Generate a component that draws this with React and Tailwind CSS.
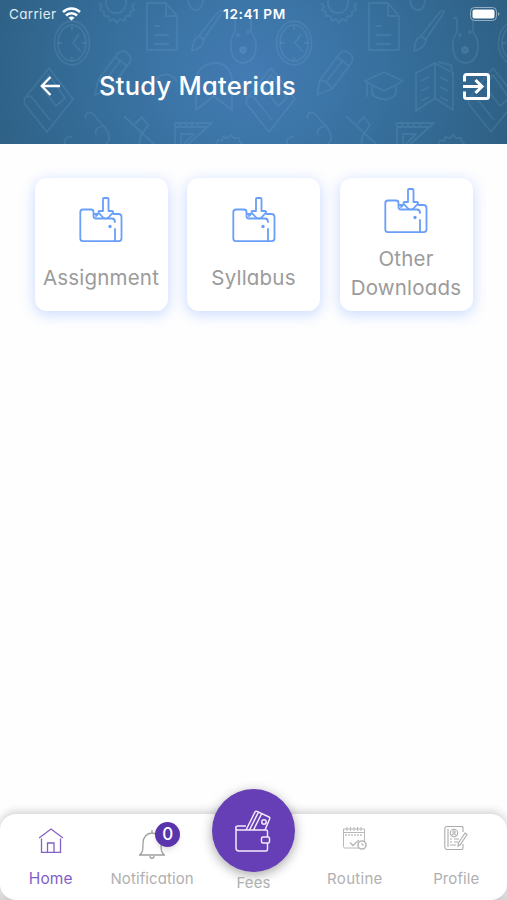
const materials = ["Assignment", "Syllabus", "Other Downloads"];

// School doodles, one tile is 222px wide
function Doodles() {
  return (
    <svg
      className="absolute inset-0 h-full w-full"
      viewBox="0 0 507 144"
      fill="none"
      stroke="#8fb9dc"
      strokeOpacity="0.15"
      strokeWidth="1.8"
      strokeLinejoin="round"
    >
      <defs>
        <g id="tile">
          {/* clock */}
          <ellipse cx="72" cy="43" rx="17.5" ry="22" />
          <ellipse cx="72" cy="43" rx="14" ry="18" />
          <path d="M79 34l-6 9 8 9M72 26v4M72 57v3M58 43h4M82 43h4" />
          {/* gear */}
          <circle cx="116" cy="3" r="10" />
          <path d="M99 3l3 3-2 4 4 2v4l4 0 2 5 4-2 3 4 3-4 4 2 2-5h4v-4l4-2-2-4 3-3" />
          {/* document */}
          <path d="M147 3h19l11 13v34h-30zM166 3v13h11M154 26h6M154 35h15M154 44h15" />
          {/* brush */}
          <path d="M192 51c1-8 2-13 7-15l19-24c3-3 5-1 3 2l-17 25c0 6-5 10-12 12zM199 36l5 4" />
          {/* bulb and flask */}
          <path d="M188 0c1 7 4 10 8 10s7-4 7-10" />
          <path d="M231 18h4v14c-7 8-6 30 8 31 15-1 16-22 8-31V18" />
          <circle cx="243" cy="50" r="3" fill="#8fb9dc" fillOpacity=".15" />
          <circle cx="238" cy="35" r="1" />
          <circle cx="248" cy="32" r="1" />
          {/* pencil */}
          <path d="M95 95l3-15 20-27c6-5 15 2 12 9l-20 27zM98 80c5 1 10 4 12 9M115 57l12 9M104 82l17-22" />
          {/* book */}
          <path d="M49 68L25 98c-2 4 0 7 2 9l20 25 26-33zM27 97c3-2 5 0 7 3l16 20M49 75l-8 11 15 20 9-8z" />
          {/* glasses */}
          <path d="M86 119c-3-6 4-9 8-4l12 14c5 8 4 13-2 16M96 135c-2-6 4-10 10-8" />
          {/* compass */}
          <path d="M124 116l32 30M135 124l7-7 6 8-8 12M141 134l-2 12M65 145c-1-6 2-9 7-8" />
          {/* set square */}
          <path d="M175 146v-23h37l-26 23M175 127h33M181 146v-12h13l-12 12M180 123v4M186 123v4M192 123v4M198 123v4" />
          <path d="M216 145l2-5 4 1 1-4 5 1 3-3 3 3 5 0 1 4 4 3" />
        </g>
      </defs>
      <use href="#tile" />
      <use href="#tile" x="222" />
      <use href="#tile" x="444" />
      {/* ribbon behind the title */}
      <path d="M196 110V78c2-10 10-15 20-15s14 7 16 15v32l-18-14zM155 82c4-10 18-10 22 0" />
      {/* graduation cap */}
      <path d="M365 81l19-9 19 9-19 10zM372 86v8c7 7 18 7 24 0v-8M367 83v14" />
      {/* map */}
      <path d="M416 73l19-10 18 10v37l-18-12-19 13zM435 63v35M421 81l8-4M421 91l8-4M421 101l8-4M440 77l8 4M440 87l8 4M440 97l8 4M438 62l13 3 1 6" />
    </svg>
  );
}

function FolderIcon() {
  return (
    <svg
      className="h-[46px] w-11 shrink-0"
      viewBox="0 0 44 46"
      fill="none"
      stroke="#699ff8"
      strokeWidth="1.8"
      strokeLinejoin="round"
      strokeLinecap="round"
    >
      <path d="M17 21.500h16c2 0 3 1.200 3 3.500M36 32v12M17 21.500c-1.500 0-2.500-1-2.500-2.500v-4c0-1.500-.8-2.500-2.500-2.500H4c-2 0-2.700 1-2.700 2.700V41.500c0 1.700 1 2.700 2.700 2.700h35.500c2 0 3-1 3-2.700V20c0-2-1-3-3-3h-5M16 17h3l-2 2" />
      <path d="M25 1h3.500c.7 0 1 .4 1 1v12h3c1.700 0 2 1 1 2.200l-4 4.300c-1.500 1-4 1-5.500 0l-4-4.300c-1-1.200-.7-2.200 1-2.200h3V2c0-.6.300-1 1-1z" fill="white" />
      <circle cx="31" cy="29.500" r=".8" fill="#699ff8" />
    </svg>
  );
}

function HomeIcon() {
  return (
    <svg className="h-[26px] w-6" viewBox="0 0 24 26" fill="none" stroke="#8061c7" strokeWidth="1.3">
      <path d="M0 10L12 1l12 9M2.500 10.500v13.800h19V10.500M8.500 24v-9h6.500v9" />
    </svg>
  );
}

function BellIcon() {
  return (
    <svg className="h-[30px] w-7" viewBox="0 0 28 30" fill="none" stroke="#a0a0a0" strokeWidth="1.300">
      <path d="M14 1v3M2 26c3-3 3-6 3-12 0-6 4-10 9-10s9 4 9 10c0 6 0 9 3 12zM1 26h26M12 27c0 3 4 3 4 0" />
    </svg>
  );
}

function WalletIcon() {
  return (
    <svg className="h-[42px] w-9" viewBox="0 0 36 42" fill="none" stroke="#f2eafa" strokeWidth="1.500" strokeLinejoin="round">
      <path d="M11 20L20 2c.5-1 1-1 2-.600l12 5.600c1 .500 1 1 .600 2L30 20M14.500 20l9-18M18.500 20l8-16M11 16H3c-3 0-3 4 0 4h28c1 0 1.500.6 1.500 1.500V27M1 18v20c0 2 1 3 3 3h27c1 0 1.500-.6 1.500-1.500V33" />
      <rect x="26.500" y="27" width="8" height="6" rx="1.500" />
      <circle cx="29" cy="12" r="2.200" />
    </svg>
  );
}

function CalendarIcon() {
  return (
    <svg className="h-6 w-6" viewBox="0 0 24 24" fill="none" stroke="#b8b8b8" strokeWidth="1">
      <path d="M16 22H2c-1 0-1.500-.5-1.500-1.500V3h21v13M.500 6.500h21M4 1v4M7.500 1v4M11 1v4M14.500 1v4M18 1v4" />
      <path d="M3 8v2M6 8v2M9 8v2M12 8v2M15 8v2M18 8v2M7 16.500l3 3 6-5.500" strokeWidth="1.300" />
      <circle cx="19" cy="19" r="4" strokeWidth="1.600" />
      <path d="M19 17v2h2" />
    </svg>
  );
}

function ProfileIcon() {
  return (
    <svg className="h-6 w-6" viewBox="0 0 24 24" fill="none" stroke="#acacac" strokeWidth="1.100">
      <path d="M19 6V1.500C19 1 18.500.500 18 .500H3C1.500.500.800 1.500.800 3v18c0 1.500.700 2.500 2.200 2.500h15c1 0 1-1 1-2V18M4 3v18" />
      <circle cx="10" cy="7" r="3.700" />
      <circle cx="10" cy="6" r="1.200" />
      <path d="M7.500 9.500c1-2 4-2 5 0M6 13h2M10 13h5M6 16h2M10 16h4M6 19h6M21 7l2 1.500-6.500 10L14 20l.500-3z" />
    </svg>
  );
}

export default function App() {
  return (
    <div className="flex h-[900px] w-[507px] flex-col overflow-hidden bg-[#fefefe] font-['Inter',sans-serif] [font-feature-settings:'cv11','ss03']">

      {/* Header */}
      <header className="relative h-36 shrink-0 bg-[radial-gradient(ellipse_270px_230px_at_248px_74px,#437bb3_0%,#3b74a5_35%,#336a94_70%,#2f6084_100%)] text-white">
        <Doodles />
        <div className="relative grid h-7 grid-cols-3 items-center pl-[9px] pr-[7px] text-[13.5px]">
          <div className="flex items-center gap-1.5">
            <span className="tracking-[0.35px] text-[#e1ebf2]">Carrier</span>
            <svg className="h-[14px] w-[19px]" viewBox="0 0 19 14" fill="none" stroke="white" strokeWidth="2.500">
              <path d="M1 5c5-4.800 12-4.800 17 0M4 8.500c3-3 8-3 11 0" />
              <path d="M9.500 13.500L6.500 10.700c1.600-1.500 4.400-1.500 6 0z" fill="white" stroke="none" />
            </svg>
          </div>
          <span className="text-center text-[13.6px] font-semibold tracking-[0.65px]">12:41 PM</span>
          <svg className="h-[14px] w-[30px] justify-self-end" viewBox="0 0 30 14" fill="none">
            <rect x=".5" y=".5" width="26" height="13" rx="4" stroke="#90aec4" />
            <rect x="2.500" y="2.500" width="22" height="9" rx="2" fill="white" />
            <path d="M28 5v4c2-1 2-3 0-4z" fill="#90aec4" />
          </svg>
        </div>
        <div className="relative flex h-[116px] items-center pl-10 pr-[17px]">
          <svg className="h-5 w-5" viewBox="0 0 20 20" fill="none" stroke="white" strokeWidth="2.300">
            <path d="M20 10H2M10.500 1L1.800 10l8.700 9" />
          </svg>
          <h1 className="ml-[39px] grow whitespace-nowrap text-[25.5px] font-medium tracking-[0.27px]">
            Study Materials
          </h1>
          <svg className="h-[27px] w-[27px]" viewBox="0 0 27 27" fill="none" stroke="white" strokeWidth="3">
            <path d="M1.500 8.500V3.500a2 2 0 0 1 2-2h20a2 2 0 0 1 2 2v20a2 2 0 0 1-2 2h-20a2 2 0 0 1-2-2v-5M0 13.500h19M12.500 7l6.500 6.500-6.500 6.500" />
          </svg>
        </div>
      </header>

      {/* Materials */}
      <main className="grid grow grid-cols-3 content-start gap-x-[19.5px] px-[34.5px] pt-[34px]">
        {materials.map((title) => (
          <div
            key={title}
            className="flex h-[133px] flex-col items-center justify-center gap-[10px] rounded-[12px] bg-white text-center text-[20.5px] leading-[29px] tracking-[0.2px] text-[#9b9b9b] shadow-[0_3px_14px_1px_rgba(130,170,255,0.4)]"
          >
            <FolderIcon />
            <p className={title === "Other Downloads" ? "w-[116px]" : "mt-[10px]"}>{title}</p>
          </div>
        ))}
      </main>

      {/* Bottom bar */}
      <div className="bg-linear-to-b from-transparent from-80% to-[#d8d8d8]">
        <nav className="grid h-[86px] grid-cols-5 rounded-[16px] bg-white text-center text-[15px] leading-5 tracking-[0.1px] text-[#b0b0b0] shadow-[0_-2px_10px_rgba(0,0,0,0.2)]">
          <div className="flex flex-col items-center pt-[14px] text-[#8061c7]">
            <HomeIcon />
            <span className="mt-[15px] text-[15.5px]">Home</span>
          </div>
          <div className="relative flex flex-col items-center pt-[15px]">
            <BellIcon />
            <span className="mt-[10px]">Notification</span>
            <span className="absolute left-[54px] top-2 h-[25px] w-[25px] rounded-full bg-[#5a34ac] text-[17px] font-medium leading-[25px] text-white shadow-md">0</span>
          </div>
          <div className="flex flex-col items-center">
            <div className="-mt-[25px] flex h-[83px] w-[83px] shrink-0 items-center justify-center rounded-full bg-[#663eb5] shadow-[0_3px_12px_rgba(0,0,0,0.35)]">
              <WalletIcon />
            </div>
            <span className="mt-px">Fees</span>
          </div>
          <div className="flex flex-col items-center pt-3">
            <CalendarIcon />
            <span className="mt-[19px] tracking-[0.3px]">Routine</span>
          </div>
          <div className="flex flex-col items-center pt-3">
            <ProfileIcon />
            <span className="mt-[19px]">Profile</span>
          </div>
        </nav>
      </div>

    </div>
  );
}
